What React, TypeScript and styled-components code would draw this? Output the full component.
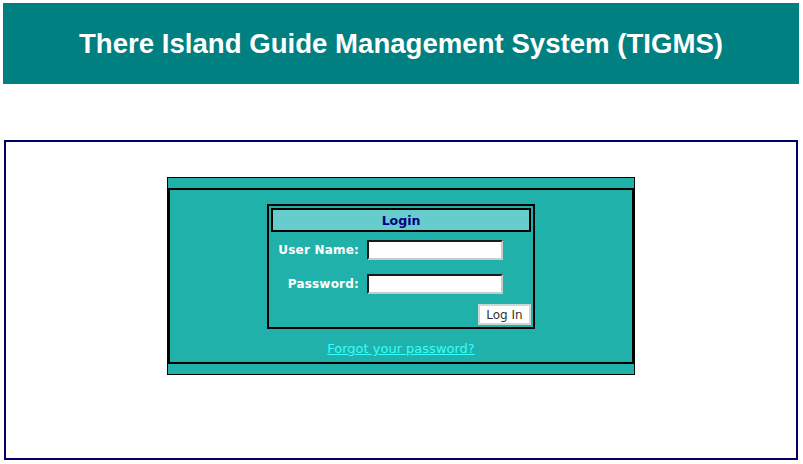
import React from "react";
import styled, { createGlobalStyle } from "styled-components";

const Global = createGlobalStyle`
  html, body { margin: 0; padding: 0; background: #ffffff; }
  body { font-family: "DejaVu Sans", Verdana, sans-serif; }
`;

const Page = styled.div`
  padding: 3px 4px 3px 3px;
`;

const Banner = styled.header`
  height: 81px;
  background: #008080;
  display: flex;
  align-items: center;
  justify-content: center;
`;

const Title = styled.h1`
  margin: 0;
  color: #ffffff;
  font-family: "Liberation Sans", Arial, sans-serif;
  font-weight: bold;
  font-size: 27.6px;
  letter-spacing: 0;
`;

const Frame = styled.section`
  margin: 56px 0 0 1px;
  width: 794px;
  height: 320px;
  box-sizing: border-box;
  border: 2px solid #000066;
  padding-top: 35px;
`;

const Panel = styled.div`
  width: 468px;
  box-sizing: border-box;
  margin: 0 auto;
  background: #20b2aa;
  border: 1px solid #000000;
  padding: 10px 0;
`;

const PanelInner = styled.div`
  border: 2px solid #000000;
  padding: 14px 0 5px;
  display: flex;
  flex-direction: column;
  align-items: center;
`;

const LoginBox = styled.form`
  width: 268px;
  box-sizing: border-box;
  border: 2px solid #000000;
  padding: 2px;
  display: flex;
  flex-direction: column;
`;

const LoginHead = styled.div`
  height: 24px;
  box-sizing: border-box;
  border: 2px solid #000000;
  background: #66cccc;
  color: #000080;
  font-weight: bold;
  font-size: 12.5px;
  display: flex;
  align-items: center;
  justify-content: center;
`;

const Fields = styled.div`
  margin-top: 8px;
  display: grid;
  grid-template-columns: 88px 136px;
  column-gap: 8px;
  row-gap: 14px;
  align-items: center;
`;

const Label = styled.label`
  color: #ffffff;
  font-weight: bold;
  font-size: 12px;
  letter-spacing: 0.2px;
  text-align: right;
  white-space: nowrap;
`;

const Input = styled.input`
  width: 136px;
  height: 20px;
  box-sizing: border-box;
  margin: 0;
  padding: 0 2px;
  background: #ffffff;
  border-style: solid;
  border-width: 2px;
  border-color: #1a1a1a #c4cccc #c4cccc #1a1a1a;
  font-family: "DejaVu Sans", sans-serif;
  font-size: 12px;
  outline: none;
`;

const ButtonRow = styled.div`
  margin-top: 10px;
  display: flex;
  justify-content: flex-end;
`;

const Button = styled.button`
  width: 53px;
  height: 21px;
  box-sizing: border-box;
  margin: 0;
  padding: 0;
  background: #ffffff;
  border: 2px solid #c8d8d8;
  color: #333333;
  font-family: "DejaVu Sans", sans-serif;
  font-size: 12px;
`;

const Forgot = styled.a`
  margin-top: 12px;
  line-height: 16px;
  font-size: 13px;
  color: #33ffff;
  text-decoration: underline;
`;

export default function App() {
  return (
    <>
      <Global />
      <Page>
        <Banner>
          <Title>There Island Guide Management System (TIGMS)</Title>
        </Banner>
        <Frame>
          <Panel>
            <PanelInner>
              <LoginBox onSubmit={(e) => e.preventDefault()}>
                <LoginHead>Login</LoginHead>
                <Fields>
                  <Label htmlFor="user">User Name:</Label>
                  <Input id="user" type="text" />
                  <Label htmlFor="pass">Password:</Label>
                  <Input id="pass" type="password" />
                </Fields>
                <ButtonRow>
                  <Button type="submit">Log In</Button>
                </ButtonRow>
              </LoginBox>
              <Forgot href="#">Forgot your password?</Forgot>
            </PanelInner>
          </Panel>
        </Frame>
      </Page>
    </>
  );
}
